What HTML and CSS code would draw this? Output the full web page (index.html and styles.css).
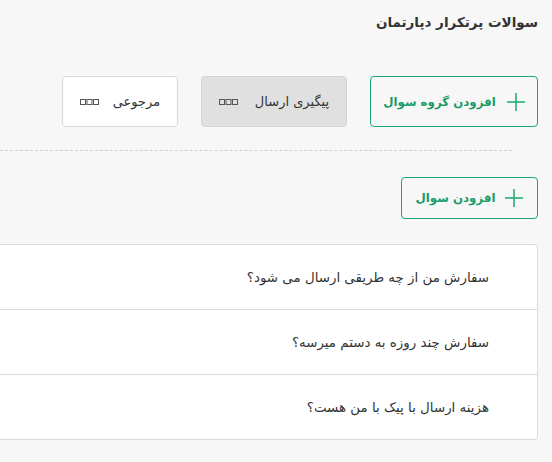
FILE: index.html
```html
<!DOCTYPE html>
<html lang="fa" dir="rtl">

<head>
    <meta charset="UTF-8">
    <meta name="viewport" content="width=device-width, initial-scale=1.0">
    <title>سوالات پرتکرار دپارتمان</title>
    <link rel="stylesheet" href="styles.css">
</head>

<body>
    <div class="page">
        <h2 class="page-title">سوالات پرتکرار دپارتمان</h2>

        <div class="toolbar">
            <button class="btn btn-green btn-lg">
                <svg class="plus" viewBox="0 0 18 18"><path d="M9 0v18M0 9h18" /></svg>
                افزودن گروه سوال
            </button>
            <button class="btn btn-gray">
                پیگیری ارسال
                <svg class="dots" viewBox="0 0 19 6"><rect x="0.5" y="0.5" width="5" height="5" /><rect x="7" y="0.5" width="5" height="5" /><rect x="13.5" y="0.5" width="5" height="5" /></svg>
            </button>
            <button class="btn btn-white">
                مرجوعی
                <svg class="dots" viewBox="0 0 19 6"><rect x="0.5" y="0.5" width="5" height="5" /><rect x="7" y="0.5" width="5" height="5" /><rect x="13.5" y="0.5" width="5" height="5" /></svg>
            </button>
        </div>

        <div class="divider"></div>

        <button class="btn btn-green btn-md">
            <svg class="plus" viewBox="0 0 18 18"><path d="M9 0v18M0 9h18" /></svg>
            افزودن سوال
        </button>

        <div class="faq-list">
            <div class="faq-item">سفارش من از چه طریقی ارسال می شود؟</div>
            <div class="faq-item">سفارش چند روزه به دستم میرسه؟</div>
            <div class="faq-item">هزینه ارسال با پیک با من هست؟</div>
        </div>
    </div>
</body>

</html>
```

FILE: styles.css
```css
body {
    font-family: 'DejaVu Sans', sans-serif;
    background: #f7f7f7;
    margin: 0;
    padding: 0;
    overflow: hidden;
    color: #333;
}

.page {
    padding: 0 14px 0 0;
    margin-left: -20px;
}

.page-title {
    font-size: 13.5px;
    font-weight: 700;
    color: #333;
    margin: 0;
    padding-top: 14px;
    height: 76px;
    box-sizing: border-box;
}

.toolbar {
    display: flex;
    gap: 23px;
}

.btn {
    font-family: inherit;
    display: flex;
    align-items: center;
    justify-content: center;
    gap: 11px;
    border-radius: 4px;
    font-size: 13px;
    cursor: pointer;
    box-sizing: border-box;
    padding: 0;
}

.btn-green {
    background: #f7f7f7;
    border: 1.5px solid #1aaa6f;
    color: #1a9b68;
    font-weight: 700;
    font-size: 11.8px;
}

.btn-lg {
    width: 168px;
    height: 51px;
}

.btn-md {
    width: 137px;
    height: 42px;
    margin-top: 26px;
    gap: 10px;
}

.btn-gray {
    width: 146px;
    height: 51px;
    background: #e0e0e0;
    border: 1px solid #d4d4d4;
    color: #333;
    gap: 17px;
}

.btn-white {
    width: 116px;
    height: 51px;
    background: #fff;
    border: 1px solid #d8d8d8;
    color: #333;
    gap: 14px;
}

.plus {
    width: 18px;
    height: 18px;
    stroke: #1aaa6f;
    stroke-width: 1.5;
    fill: none;
}

.dots {
    width: 19px;
    height: 6px;
    fill: none;
    stroke: #555;
    stroke-width: 1;
}

.divider {
    border-top: 1px dashed #cfcfcf;
    margin: 23px 26px 0 0;
}

.faq-list {
    margin-top: 25px;
    background: #fff;
    border: 1px solid #dadada;
    border-radius: 4px;
}

.faq-item {
    height: 64px;
    display: flex;
    align-items: center;
    padding-right: 48px;
    font-size: 13.4px;
    color: #333;
    border-bottom: 1px solid #dadada;
}

.faq-item:last-child {
    border-bottom: none;
}
```
